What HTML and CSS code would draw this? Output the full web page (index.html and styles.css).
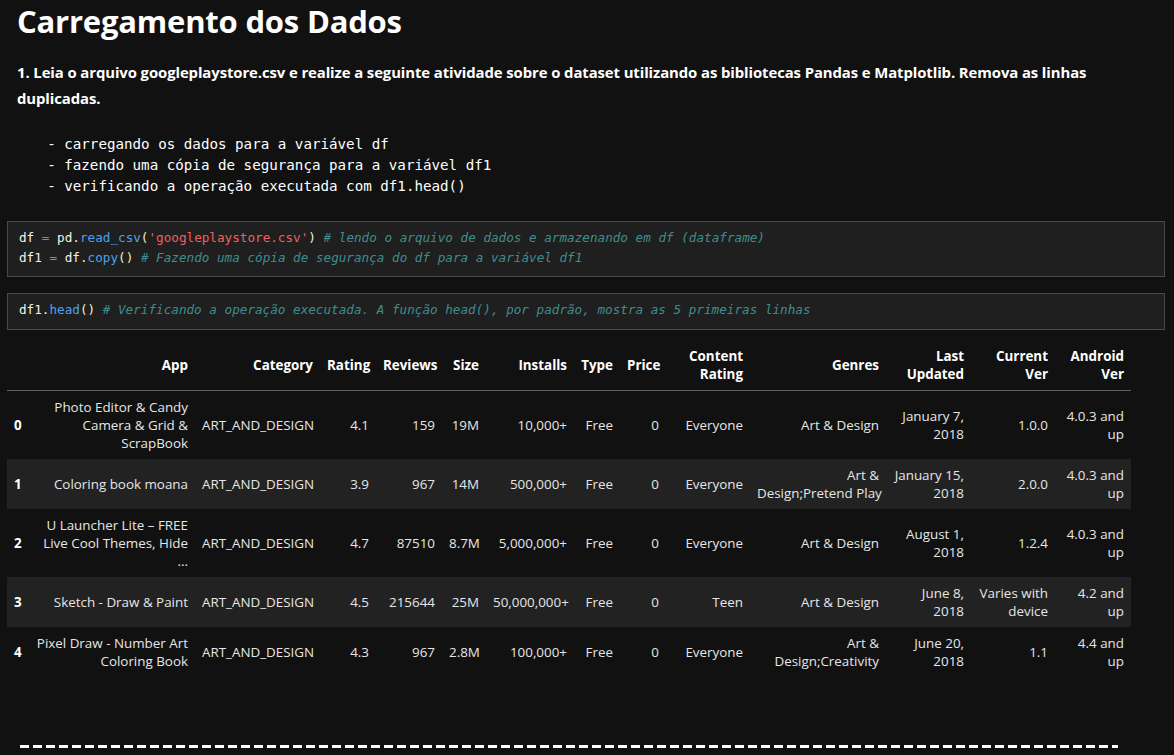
FILE: index.html
```html
<!DOCTYPE html>
<html lang="pt">
<head>
<meta charset="utf-8">
<title>Carregamento dos Dados</title>
<link rel="stylesheet" href="styles.css">
</head>
<body>
<div class="notebook">
  <section class="md-cell">
    <h1 class="title">Carregamento dos Dados</h1>
    <p class="lead">1. Leia o arquivo googleplaystore.csv e realize a seguinte atividade sobre o dataset utilizando as bibliotecas Pandas e Matplotlib. Remova as linhas<br>duplicadas.</p>
    <pre class="md-pre">    - carregando os dados para a variável df
    - fazendo uma cópia de segurança para a variável df1
    - verificando a operação executada com df1.head()</pre>
  </section>

  <section class="code-cell cell-a">
    <pre class="code"><span class="v">df</span> <span class="op">=</span> <span class="v">pd</span>.<span class="fn">read_csv</span><span class="p">(</span><span class="s">'googleplaystore.csv'</span><span class="p">)</span> <span class="c"># lendo o arquivo de dados e armazenando em df (dataframe)</span>
<span class="v">df1</span> <span class="op">=</span> <span class="v">df</span>.<span class="fn">copy</span><span class="p">()</span> <span class="c"># Fazendo uma cópia de segurança do df para a variável df1</span></pre>
  </section>

  <section class="code-cell cell-b">
    <pre class="code"><span class="v">df1</span>.<span class="fn">head</span><span class="p">()</span> <span class="c"># Verificando a operação executada. A função head(), por padrão, mostra as 5 primeiras linhas</span></pre>
  </section>

  <section class="output">
    <table class="dataframe">
      <colgroup>
        <col class="w-idx"><col class="w-app"><col class="w-cat"><col class="w-rat"><col class="w-rev"><col class="w-size"><col class="w-inst"><col class="w-type"><col class="w-price"><col class="w-cr"><col class="w-gen"><col class="w-lu"><col class="w-cv"><col class="w-av">
      </colgroup>
      <thead>
        <tr>
          <th></th><th>App</th><th>Category</th><th>Rating</th><th>Reviews</th><th>Size</th><th>Installs</th><th>Type</th><th>Price</th><th>Content<br>Rating</th><th>Genres</th><th>Last<br>Updated</th><th>Current<br>Ver</th><th>Android<br>Ver</th>
        </tr>
      </thead>
      <tbody>
        <tr>
          <th>0</th><td>Photo Editor &amp; Candy<br>Camera &amp; Grid &amp;<br>ScrapBook</td><td>ART_AND_DESIGN</td><td>4.1</td><td>159</td><td>19M</td><td>10,000+</td><td>Free</td><td>0</td><td>Everyone</td><td>Art &amp; Design</td><td>January 7,<br>2018</td><td>1.0.0</td><td>4.0.3 and<br>up</td>
        </tr>
        <tr>
          <th>1</th><td>Coloring book moana</td><td>ART_AND_DESIGN</td><td>3.9</td><td>967</td><td>14M</td><td>500,000+</td><td>Free</td><td>0</td><td>Everyone</td><td>Art &amp;<br>Design;Pretend Play</td><td>January 15,<br>2018</td><td>2.0.0</td><td>4.0.3 and<br>up</td>
        </tr>
        <tr>
          <th>2</th><td>U Launcher Lite – FREE<br>Live Cool Themes, Hide<br>...</td><td>ART_AND_DESIGN</td><td>4.7</td><td>87510</td><td>8.7M</td><td>5,000,000+</td><td>Free</td><td>0</td><td>Everyone</td><td>Art &amp; Design</td><td>August 1,<br>2018</td><td>1.2.4</td><td>4.0.3 and<br>up</td>
        </tr>
        <tr>
          <th>3</th><td>Sketch - Draw &amp; Paint</td><td>ART_AND_DESIGN</td><td>4.5</td><td>215644</td><td>25M</td><td>50,000,000+</td><td>Free</td><td>0</td><td>Teen</td><td>Art &amp; Design</td><td>June 8,<br>2018</td><td>Varies with<br>device</td><td>4.2 and<br>up</td>
        </tr>
        <tr>
          <th>4</th><td>Pixel Draw - Number Art<br>Coloring Book</td><td>ART_AND_DESIGN</td><td>4.3</td><td>967</td><td>2.8M</td><td>100,000+</td><td>Free</td><td>0</td><td>Everyone</td><td>Art &amp;<br>Design;Creativity</td><td>June 20,<br>2018</td><td>1.1</td><td>4.4 and<br>up</td>
        </tr>
      </tbody>
    </table>
  </section>

  <div class="dashes" aria-hidden="true"></div>
</div>
</body>
</html>
```

FILE: styles.css
```css
html, body {
  margin: 0;
  background: #111111;
}

body {
  color: #ffffff;
  font-family: "Open Sans", "Liberation Sans", sans-serif;
  overflow: hidden;
}

.notebook {
  padding: 0 9px 0 7px;
}

.md-cell {
  padding-left: 10px;
}

.title {
  margin: 0;
  padding-top: 1px;
  font-size: 31px;
  line-height: 40px;
  font-weight: 700;
  letter-spacing: -0.2px;
}

.lead {
  margin: 18px 0 0;
  font-size: 14.9px;
  line-height: 26px;
  font-weight: 700;
  letter-spacing: -0.1px;
}

.md-pre {
  margin: 23px 0 0 -4px;
  font-family: "DejaVu Sans Mono", "Liberation Mono", monospace;
  font-size: 14.2px;
  line-height: 21px;
  color: #ffffff;
}

.code-cell {
  background: #1f1f1f;
  border: 1px solid #4a4a4a;
  padding: 6px 11px 8px;
}

.cell-a {
  margin-top: 24px;
}

.cell-b {
  margin-top: 16px;
  padding-bottom: 9px;
}

.code {
  margin: 0;
  font-family: "DejaVu Sans Mono", "Liberation Mono", monospace;
  font-size: 12.65px;
  line-height: 20px;
  color: #e8e8e8;
}

.code .v { color: #f4f4ea; }
.code .op { color: #e048ff; }
.code .fn { color: #4aa3f0; }
.code .s { color: #f0605e; }
.code .p { color: #f7f0c0; }
.code .c { color: #3e8e8e; font-style: italic; }

.output {
  margin-top: 10px;
}

.dataframe {
  border-collapse: collapse;
  table-layout: fixed;
  width: 1124px;
  font-size: 13.4px;
  line-height: 18px;
  color: #e6e6e6;
}

.dataframe th,
.dataframe td {
  padding: 7px 7px;
  text-align: right;
  vertical-align: middle;
  white-space: nowrap;
  overflow: visible;
}

.dataframe th {
  color: #ffffff;
  font-weight: 700;
}

.dataframe tbody th {
  text-align: left;
}

.dataframe thead th {
  border-bottom: 1px solid #5f5f5f;
}

.dataframe tbody tr:nth-child(even) {
  background: #222222;
}

.w-idx { width: 21px; }
.w-app { width: 167px; }
.w-cat { width: 125px; }
.w-rat { width: 56px; }
.w-rev { width: 66px; }
.w-size { width: 44px; }
.w-inst { width: 88px; }
.w-type { width: 46px; }
.w-price { width: 46px; }
.w-cr { width: 84px; }
.w-gen { width: 136px; }
.w-lu { width: 85px; }
.w-cv { width: 84px; }
.w-av { width: 76px; }

.dashes {
  margin: 68px 0 0 13px;
  width: 1098px;
  height: 3px;
  background: repeating-linear-gradient(90deg, #ffffff 0 9px, transparent 9px 13px);
}
```
